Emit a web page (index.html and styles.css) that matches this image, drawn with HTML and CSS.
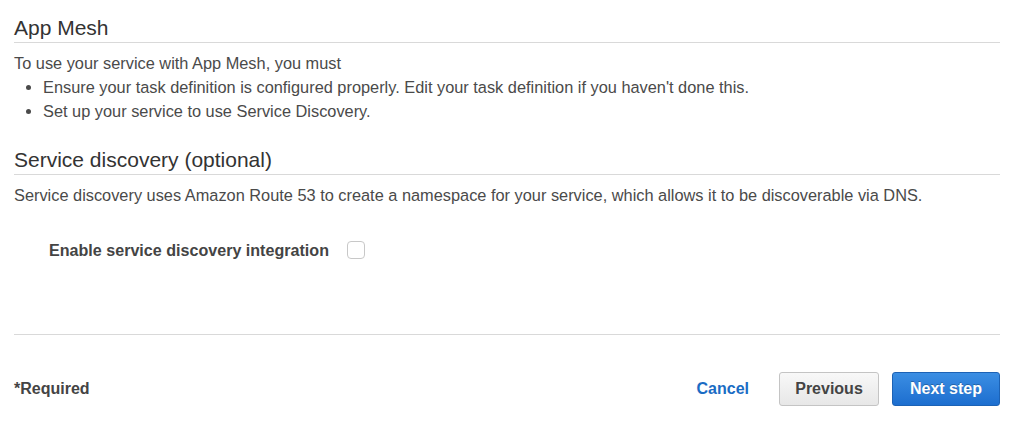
FILE: index.html
```html
<!DOCTYPE html>
<html lang="en">
<head>
<meta charset="utf-8">
<title>Configure service</title>
<link rel="stylesheet" href="styles.css">
</head>
<body>
<div class="page">
  <section class="section">
    <h2 class="section-title">App Mesh</h2>
    <p class="section-text">To use your service with App Mesh, you must</p>
    <ul class="steps">
      <li>Ensure your task definition is configured properly. Edit your task definition if you haven't done this.</li>
      <li>Set up your service to use Service Discovery.</li>
    </ul>
  </section>

  <section class="section section-discovery">
    <h2 class="section-title">Service discovery (optional)</h2>
    <p class="section-text">Service discovery uses Amazon Route 53 to create a namespace for your service, which allows it to be discoverable via DNS.</p>
    <div class="field-row">
      <label class="field-label" for="sd">Enable service discovery integration</label>
      <span class="checkbox" id="sd" role="checkbox" aria-checked="false"></span>
    </div>
  </section>

  <footer class="footer">
    <span class="required">*Required</span>
    <div class="actions">
      <a class="link-cancel" href="#">Cancel</a>
      <button class="btn btn-secondary" type="button">Previous</button>
      <button class="btn btn-primary" type="button">Next step</button>
    </div>
  </footer>
</div>
</body>
</html>
```

FILE: styles.css
```css
html, body {
  margin: 0;
  padding: 0;
  background: #ffffff;
}

body {
  font-family: "Liberation Sans", Arial, Helvetica, sans-serif;
  font-size: 16px;
  line-height: 24px;
  color: #4a4a4a;
}

.page {
  padding: 16px 24px 0 14px;
}

.section-title {
  margin: 0;
  padding-bottom: 2px;
  font-size: 21px;
  line-height: 24px;
  font-weight: normal;
  color: #333333;
  border-bottom: 1px solid #d9d9d9;
}

.section-text {
  margin: 8px 0 0;
  font-size: 16.35px;
}

.steps {
  margin: 0;
  padding-left: 29px;
  font-size: 16.35px;
}

.section-discovery {
  margin-top: 25px;
}

.field-row {
  display: flex;
  align-items: center;
  gap: 18px;
  margin-top: 31px;
  padding-left: 35px;
  height: 24px;
}

.field-label {
  font-weight: bold;
  font-size: 16.1px;
  color: #444444;
}

.checkbox {
  width: 16px;
  height: 16px;
  border: 1px solid #c8c8c8;
  border-radius: 4px;
  background: #ffffff;
}

.footer {
  margin-top: 72px;
  border-top: 1px solid #d9d9d9;
  padding-top: 37px;
  display: flex;
  justify-content: space-between;
  align-items: center;
}

.required {
  font-weight: bold;
  color: #444444;
}

.actions {
  display: flex;
  align-items: center;
}

.link-cancel {
  font-weight: bold;
  color: #1a6cc4;
  text-decoration: none;
  margin-right: 30px;
}

.btn {
  height: 34px;
  font-family: "Liberation Sans", Arial, Helvetica, sans-serif;
  font-size: 16px;
  font-weight: bold;
  border-radius: 3px;
  padding: 0;
  cursor: pointer;
}

.btn-secondary {
  width: 100px;
  color: #444444;
  border: 1px solid #c4c4c4;
  background: linear-gradient(#f8f8f8, #e7e7e7);
}

.btn-primary {
  width: 108px;
  margin-left: 13px;
  color: #ffffff;
  border: 1px solid #1c62b5;
  background: linear-gradient(#3b8ee3, #1d6ecf);
  text-shadow: 0 -1px 0 rgba(0, 0, 0, 0.25);
}
```
